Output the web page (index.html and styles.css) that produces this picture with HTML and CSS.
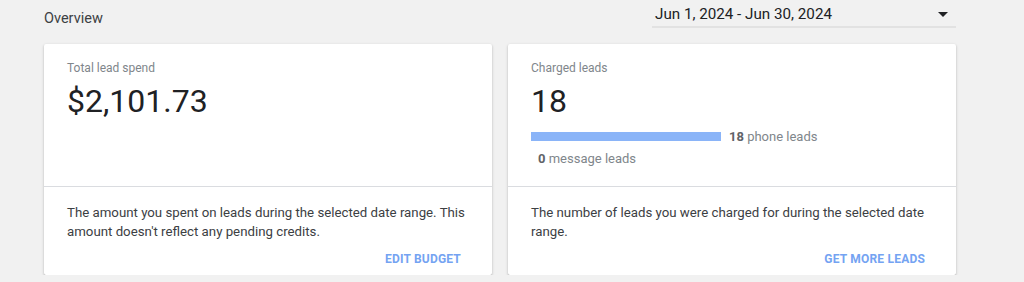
FILE: index.html
```html
<!DOCTYPE html>
<html>
<head>
<meta charset="utf-8">
<link rel="stylesheet" href="styles.css">
</head>
<body>
<div class="page">
  <div class="header">
    <div class="title">Overview</div>
    <div class="date-select">
      <span class="date-text">Jun 1, 2024 - Jun 30, 2024</span>
      <svg class="caret" width="10" height="5" viewBox="0 0 10 5"><path d="M0 0 L10 0 L5 5 Z" fill="#202124"/></svg>
    </div>
  </div>
  <div class="cards">
    <div class="card">
      <div class="card-top">
        <div class="label">Total lead spend</div>
        <div class="value">$2,101.73</div>
      </div>
      <div class="card-bottom">
        <p class="desc">The amount you spent on leads during the selected date range. This amount doesn't reflect any pending credits.</p>
        <div class="actions"><span class="btn">EDIT BUDGET</span></div>
      </div>
    </div>
    <div class="card">
      <div class="card-top">
        <div class="label">Charged leads</div>
        <div class="value">18</div>
        <div class="bar-row">
          <div class="bar" style="width:190px"></div>
          <span class="bar-label"><b>18</b> phone leads</span>
        </div>
        <div class="bar-row second">
          <span class="bar-label"><b>0</b> message leads</span>
        </div>
      </div>
      <div class="card-bottom">
        <p class="desc">The number of leads you were charged for during the selected date range.</p>
        <div class="actions"><span class="btn">GET MORE LEADS</span></div>
      </div>
    </div>
  </div>
</div>
</body>
</html>
```
FILE: styles.css
```css
* { box-sizing: border-box; }
html, body {
  margin: 0;
  background: #f1f1f1;
  font-family: Roboto, "Noto Sans", Arial, sans-serif;
  color: #3c4043;
}
.page {
  width: 912px;
  margin-left: 44px;
}
.header {
  display: flex;
  justify-content: space-between;
  align-items: flex-start;
  height: 44px;
}
.title {
  font-size: 14.5px;
  line-height: 20px;
  padding-top: 9px;
  color: #3c4043;
}
.date-select {
  width: 304px;
  height: 28px;
  display: flex;
  align-items: center;
  justify-content: space-between;
  padding: 0 8px 0 3px;
  border-bottom: 2px solid #e2e2e2;
}
.date-text {
  font-size: 15.2px;
  color: #202124;
  line-height: 20px;
  margin-top: 1px;
}
.caret { margin-top: 2px; }
.cards {
  display: grid;
  grid-template-columns: 448px 448px;
  gap: 16px;
}
.card {
  background: #fff;
  border-radius: 2px;
  box-shadow: 0 1px 3px rgba(0,0,0,0.22), 0 1px 1px rgba(0,0,0,0.14);
  height: 231px;
  display: flex;
  flex-direction: column;
}
.card-top {
  height: 143px;
  padding: 16px 23px 0 23px;
  border-bottom: 1px solid #dadce0;
}
.label {
  font-size: 12px;
  line-height: 16px;
  color: #80868b;
}
.value {
  font-size: 32px;
  line-height: 40px;
  margin-top: 5px;
  color: #202124;
}
.bar-row {
  display: flex;
  align-items: center;
  margin-top: 8px;
  height: 14px;
}
.bar-row.second {
  margin-top: 8px;
  padding-left: 7px;
}
.bar {
  height: 9px;
  background: #8ab4f8;
  margin-right: 8px;
}
.bar-label {
  font-size: 13px;
  color: #80868b;
}
.bar-label b {
  color: #5f6368;
  font-weight: 700;
}
.card-bottom {
  flex: 1;
  padding: 16px 23px 0 23px;
  display: flex;
  flex-direction: column;
}
.desc {
  margin: 0;
  font-size: 13.25px;
  line-height: 19px;
  color: #3c4043;
}
.actions {
  display: flex;
  justify-content: flex-end;
  margin-top: 10px;
  padding-right: 8px;
}
.btn {
  font-size: 12px;
  font-weight: 700;
  color: #74a3f2;
  line-height: 16px;
  letter-spacing: 0.2px;
}
```
